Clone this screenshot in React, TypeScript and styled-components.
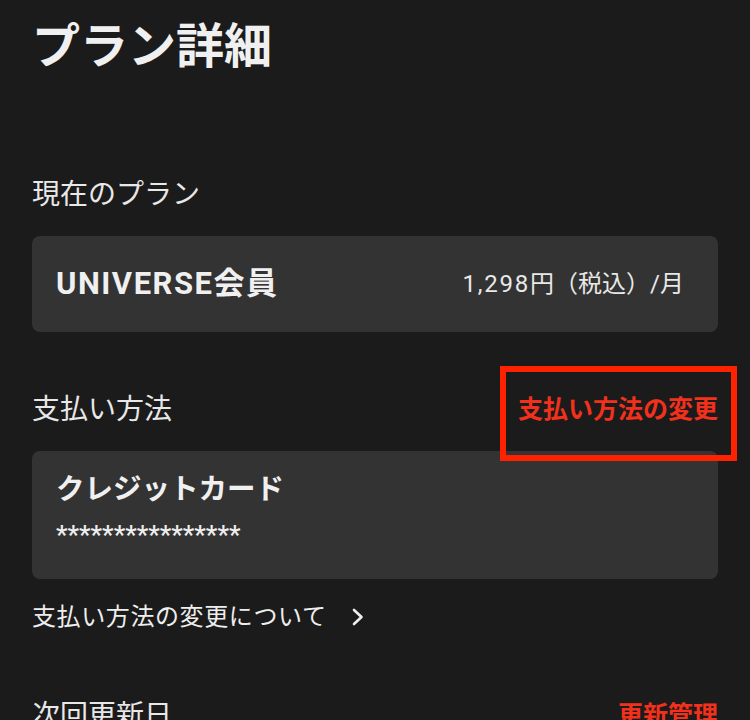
import styled, { createGlobalStyle } from "styled-components";

const GlobalStyle = createGlobalStyle`
  html, body {
    margin: 0;
    padding: 0;
    background-color: #1b1b1b;
  }
  body {
    font-family: Roboto, "Noto Sans CJK JP", "Noto Sans", sans-serif;
    color: #eeeeee;
  }
`;

const Page = styled.div`
  width: 750px;
  height: 720px;
  overflow: hidden;
  box-sizing: border-box;
  padding: 18px 32px 0;
  background-color: #1b1b1b;
`;

const Title = styled.h1`
  margin: 0 0 98px;
  font-size: 48px;
  font-weight: 700;
  line-height: 1.2;
  color: #f0f0f0;
`;

const Section = styled.section<{ $gap?: number }>`
  margin-bottom: ${(p) => p.$gap ?? 57}px;
`;

const SectionHead = styled.div`
  display: flex;
  align-items: center;
  justify-content: space-between;
  margin-bottom: 20px;
`;

const Label = styled.h2`
  margin: 0;
  font-size: 28px;
  font-weight: 400;
  line-height: 1.5;
  color: #e8e8e8;
`;

const RedLink = styled.a`
  position: relative;
  font-size: 25px;
  font-weight: 700;
  line-height: 1.5;
  color: #f2311c;
  text-decoration: none;
  cursor: pointer;
`;

const Highlight = styled.span`
  position: absolute;
  top: -25px;
  bottom: -33px;
  left: -18px;
  right: -19px;
  border: 6px solid #ff2200;
  pointer-events: none;
`;

const Card = styled.div<{ $stacked?: boolean }>`
  display: flex;
  flex-direction: ${(p) => (p.$stacked ? "column" : "row")};
  align-items: ${(p) => (p.$stacked ? "flex-start" : "center")};
  justify-content: space-between;
  gap: ${(p) => (p.$stacked ? "7px" : "0")};
  box-sizing: border-box;
  min-height: ${(p) => (p.$stacked ? 128 : 96)}px;
  padding: ${(p) => (p.$stacked ? "22px 24px 24px" : "0 34px 0 24px")};
  border-radius: 8px;
  background-color: #333333;
`;

const CardTitle = styled.div<{ $wide?: boolean }>`
  font-size: ${(p) => (p.$wide ? 31 : 28.5)}px;
  font-weight: 700;
  letter-spacing: ${(p) => (p.$wide ? 1.5 : 0)}px;
  line-height: 1.2;
  color: #f0f0f0;
`;

const Price = styled.div`
  font-size: 24px;
  font-weight: 400;
  line-height: 1.5;
  color: #e8e8e8;
`;

const Amount = styled.span`
  letter-spacing: 1.8px;
`;

const Masked = styled.div`
  font-size: 26px;
  font-weight: 500;
  line-height: 1.5;
  color: #eeeeee;
`;

const InfoLink = styled.a`
  display: inline-flex;
  align-items: center;
  gap: 24px;
  margin-top: 20px;
  font-size: 24px;
  letter-spacing: 0.6px;
  line-height: 1.5;
  color: #eeeeee;
  text-decoration: none;
  cursor: pointer;
`;

const Chevron = () => (
  <svg width="16" height="20" viewBox="0 0 16 20" fill="none">
    <path d="M4 3 L11.5 10 L4 17" stroke="#eeeeee" strokeWidth="2.6" strokeLinecap="round" strokeLinejoin="round" />
  </svg>
);

export default function App() {
  return (
    <>
      <GlobalStyle />
      <Page>
        <Title>プラン詳細</Title>

        <Section>
          <SectionHead>
            <Label>現在のプラン</Label>
          </SectionHead>
          <Card>
            <CardTitle $wide>UNIVERSE会員</CardTitle>
            <Price>
              <Amount>1,298</Amount>円（税込）/月
            </Price>
          </Card>
        </Section>

        <Section $gap={60}>
          <SectionHead>
            <Label>支払い方法</Label>
            <RedLink>
              支払い方法の変更
              <Highlight />
            </RedLink>
          </SectionHead>
          <Card $stacked>
            <CardTitle>クレジットカード</CardTitle>
            <Masked>****************</Masked>
          </Card>
          <InfoLink>
            支払い方法の変更について
            <Chevron />
          </InfoLink>
        </Section>

        <Section>
          <SectionHead>
            <Label>次回更新日</Label>
            <RedLink>更新管理</RedLink>
          </SectionHead>
        </Section>
      </Page>
    </>
  );
}
